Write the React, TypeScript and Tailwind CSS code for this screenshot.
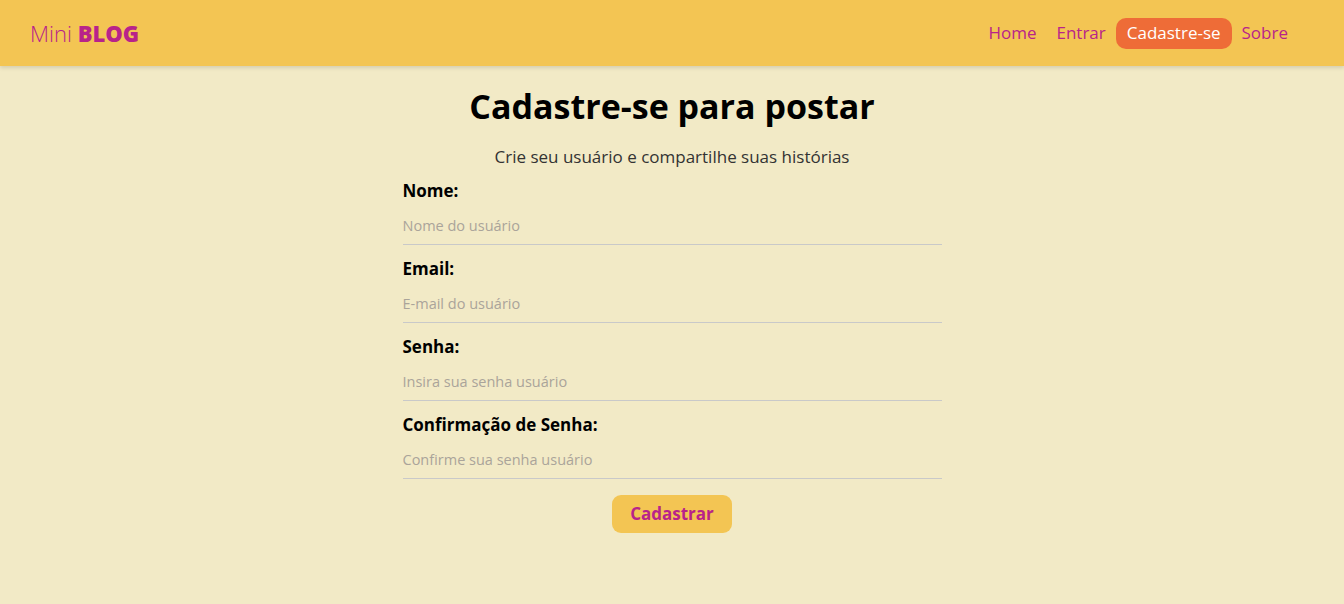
export default function App() {
  const fields = [
    { label: 'Nome:', placeholder: 'Nome do usuário', type: 'text' },
    { label: 'Email:', placeholder: 'E-mail do usuário', type: 'email' },
    { label: 'Senha:', placeholder: 'Insira sua senha usuário', type: 'password' },
    { label: 'Confirmação de Senha:', placeholder: 'Confirme sua senha usuário', type: 'password' },
  ];

  return (
    <div className="min-h-screen bg-[#f2eac6] font-['Open_Sans',sans-serif]">
      <nav className="h-[66px] bg-[#f3c553] flex items-center justify-between pl-[30px] pr-[56px] shadow-[0_2px_4px_rgba(0,0,0,0.12)]">
        <a className="text-[22px] text-[#b8238a]">
          <span className="font-light">Mini</span> <span className="font-extrabold">BLOG</span>
        </a>
        <ul className="flex items-center gap-[10px] text-[17px] text-[#b8238a]">
          <li>Home</li>
          <li className="pl-[10px]">Entrar</li>
          <li className="bg-[#ee6c37] text-white rounded-[10px] h-[31px] px-[11px] flex items-center">Cadastre-se</li>
          <li>Sobre</li>
        </ul>
      </nav>

      <div className="flex flex-col items-center pt-[20px]">
        <h1 className="text-[34px] font-bold text-black leading-[40px]">Cadastre-se para postar</h1>
        <p className="mt-[20px] text-[17px] text-[#333] leading-[22px]">Crie seu usuário e compartilhe suas histórias</p>

        <form className="w-[539px] mt-[12px] flex flex-col">
          {fields.map((f) => (
            <label key={f.label} className="flex flex-col h-[78px]">
              <span className="text-[17px] font-bold text-black leading-[22px]">{f.label}</span>
              <input
                type={f.type}
                placeholder={f.placeholder}
                className="mt-[15px] bg-transparent border-b border-[#c9c9c9] pb-[9px] text-[14.5px] leading-[18px] outline-none placeholder:text-[#aaa49a]"
              />
            </label>
          ))}
          <button
            type="button"
            className="self-center mt-[3px] w-[120px] h-[38px] rounded-[9px] bg-[#f3c553] text-[#b8238a] font-bold text-[17px]"
          >
            Cadastrar
          </button>
        </form>
      </div>
    </div>
  );
}
